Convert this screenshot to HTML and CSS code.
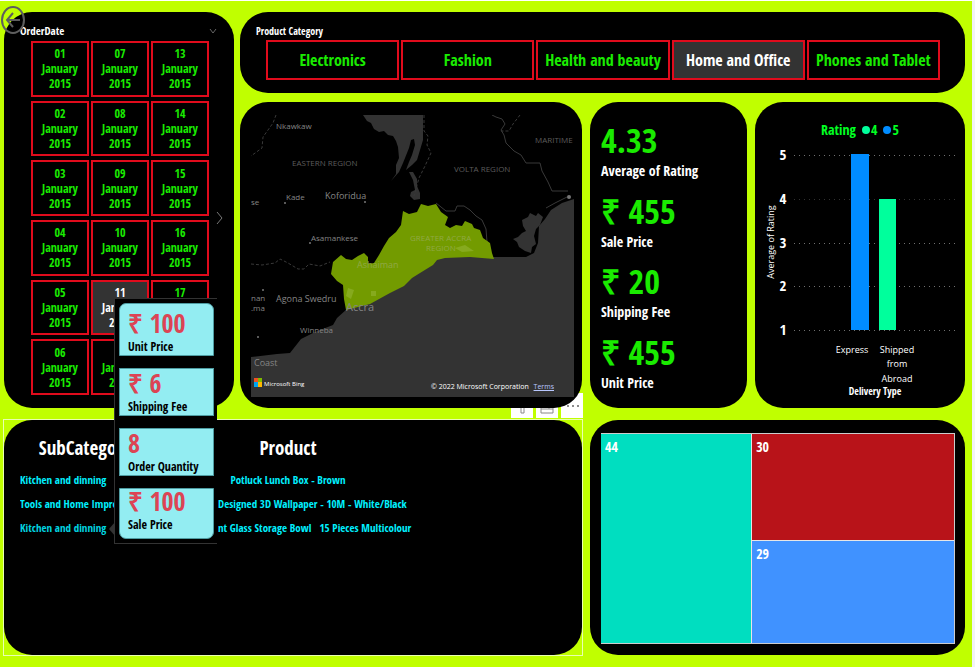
FILE: index.html
```html
<!DOCTYPE html>
<html lang="en">
<head>
<meta charset="utf-8">
<title>Sales dashboard</title>
<link rel="stylesheet" href="styles.css">
</head>
<body>
<main class="dashboard">
  <button class="back" aria-label="Back">
    <svg width="24" height="28" viewBox="0 0 24 28" fill="none" stroke="#5e5e5e" stroke-width="2"><ellipse cx="12" cy="14" rx="11" ry="13"/><path d="M19 14H6M12 7L6 14l6 7"/></svg>
  </button>

  <div class="upper">
    <section class="panel slicer">
      <header class="slicer-head">
        <h2 class="caption">OrderDate</h2>
        <svg width="8" height="6" viewBox="0 0 8 6" fill="none" stroke="#666"><path d="M1 1l3 4 3-4"/></svg>
      </header>
      <div class="dates">
        <button class="tile">01<br>January<br>2015</button>
        <button class="tile">02<br>January<br>2015</button>
        <button class="tile">03<br>January<br>2015</button>
        <button class="tile">04<br>January<br>2015</button>
        <button class="tile">05<br>January<br>2015</button>
        <button class="tile">06<br>January<br>2015</button>
        <button class="tile">07<br>January<br>2015</button>
        <button class="tile">08<br>January<br>2015</button>
        <button class="tile">09<br>January<br>2015</button>
        <button class="tile">10<br>January<br>2015</button>
        <button class="tile selected">11<br>January<br>2015</button>
        <button class="tile">12<br>January<br>2015</button>
        <button class="tile">13<br>January<br>2015</button>
        <button class="tile">14<br>January<br>2015</button>
        <button class="tile">15<br>January<br>2015</button>
        <button class="tile">16<br>January<br>2015</button>
        <button class="tile">17<br>January<br>2015</button>
        <button class="tile">18<br>January<br>2015</button>
      </div>
      <button class="next" aria-label="Next dates"><svg width="7" height="14" viewBox="0 0 7 14" fill="none" stroke="#777"><path d="M1 1l5 6-5 6"/></svg></button>
    </section>

    <div class="right">
      <section class="panel categories">
        <h2 class="caption small">Product Category</h2>
        <div class="tabs">
          <button class="tile">Electronics</button>
          <button class="tile">Fashion</button>
          <button class="tile">Health and beauty</button>
          <button class="tile selected">Home and Office</button>
          <button class="tile">Phones and Tablet</button>
        </div>
      </section>

      <div class="visuals">
        <section class="panel map">
          <svg class="map-canvas" viewBox="251 115 323 282" preserveAspectRatio="none" role="img" aria-label="Map of Greater Accra">
            <rect x="251" y="115" width="323" height="282" fill="#000"/>
            <g fill="#333">
              <path d="M363 115L367 121L371 123L374 129L379 132L384 131L388 135L393 136L396 141L398 147L399 158L396 165L396 174L391 181L399 172L403 163L409 148L411 140L414 139L415 145L412 155L409 162L406 170L412 165L417 160L420 150L423 140V115z"/>
              <path d="M409 172L413 172L417 179L417 186L420 193L420 199L414 200L410 196L411 192L415 190L413 180z"/>
              <path d="M574 199l-12 4-11 7-6 9-6 7-1 17-4 10-8 4h-32l-24-2-25 1-8 2-4 5-13 8-8 5-8 8-14 7-20 11-23 7-10 9-4 7-18 7-14 7-11 14-13 1-26 3v76h323z"/>
              <path d="M530 213l6 3 2-3 5 4-3 8-4 4-2 7 2 8-4 3-1 6-6-2-6-4-2-5-4-3 5-2 4-4 4-2-3-5-1-6 6-3z"/>
            </g>
            <g fill="none" stroke="#393939">
              <path d="M492 115l4 2 6 2 3 5-4 6 3 5 2 8 8 8 7 4 5 8h14l2 8 6 11 4 9h16M436 203l10 8 9 0 2-5h7l6 4 6 6 6 4 4 9 1 13 3 12M567 197l-12 6-9 5"/>
              <path stroke-dasharray="3 2" d="M520 115l-7 9-4 7-8 0M424 115l0 16 4 5-1 9 4 8-6 13-6 12-5 18M276 115l-3 8-10 14-1 11-11 8M251 264l11 1 13-2 5-4 8 4 10 6h6l5-5 11 2 10-4"/>
            </g>
            <path fill="#739b00" d="M346 310l-2-11-1-14-6-4-6-7 2-12 8-7 5 4 6 1 6-4 6-3 4 4 0 7 6-1 5-8 5-9 5-8 7-6 5-7 2-14 6 3 8-2 4-8 7 2 8-2 5 8 7 5-3 8 5 3 6-3 6 1 3-5 7 3 2 4 6 2 3 8 7 5 2 10 2 6-24-2-25 1-8 2-4 5-13 8-8 5-8 8-14 7-20 11z"/>
            <g fill="#86aa1e"><path d="M348 288l6 2-3 9-5-3zM371 291h5v5h-5zM455 248l10-3 9 6-12 1z"/></g>
            <g fill="#777"><circle cx="365" cy="202" r="1"/><circle cx="285" cy="203" r="1"/><circle cx="310" cy="243" r="1"/><circle cx="569" cy="197" r="2"/><circle cx="263" cy="290" r="1"/><circle cx="258" cy="337" r="1"/></g>
            <g class="place">
              <text x="276" y="129">Nkawkaw</text>
              <text x="286" y="200">Kade</text>
              <text class="town" x="325" y="199">Koforidua</text>
              <text x="311" y="241">Asamankese</text>
              <text class="town" x="276" y="302">Agona Swedru</text>
              <text x="300" y="333">Winneba</text>
              <text x="251" y="301">nan</text>
              <text x="251" y="311">.ma</text>
              <text class="town" x="254" y="366">Coast</text>
              <text class="city" x="346" y="311">Accra</text>
              <text x="251" y="205">se</text>
            </g>
            <g class="area">
              <text x="292" y="166">EASTERN REGION</text>
              <text x="454" y="172">VOLTA REGION</text>
              <text x="535" y="143">MARITIME</text>
            </g>
            <g class="area local">
              <text x="410" y="241">GREATER ACCRA</text>
              <text x="426" y="251">REGION</text>
              <text class="suburb" x="357" y="268">Ashaiman</text>
            </g>
            <path fill="#f25022" d="M254 378h4v4h-4z"/><path fill="#7fba00" d="M258 378h4v4h-4z"/><path fill="#00a4ef" d="M254 382h4v5h-4z"/><path fill="#ffb900" d="M258 382h4v5h-4z"/>
            <text class="brand" x="264" y="386">Microsoft Bing</text>
          </svg>
          <p class="credit">© 2022 Microsoft Corporation <a href="#terms">Terms</a></p>
        </section>

        <section class="panel cards">
          <div class="card"><span class="value">4.33</span><span class="label">Average of Rating</span></div>
          <div class="card"><span class="value">₹ 455</span><span class="label">Sale Price</span></div>
          <div class="card"><span class="value">₹ 20</span><span class="label">Shipping Fee</span></div>
          <div class="card"><span class="value">₹ 455</span><span class="label">Unit Price</span></div>
        </section>

        <section class="panel chart">
          <div class="legend"><span>Rating</span><span class="key four">4</span><span class="key five">5</span></div>
          <svg class="plot" viewBox="755 145 210 256" role="img" aria-label="Average of Rating by Delivery Type">
            <path stroke="#707070" stroke-dasharray="1 4" d="M794 155.500H957M794 243.500H957M794 286.500H957M794 330.500H957"/>
            <path stroke="#333" stroke-dasharray="1 4" d="M794 199.500H957"/>
            <rect x="851" y="154" width="18" height="176" fill="#008cff"/>
            <rect x="879" y="199" width="17" height="131" fill="#00ff9c"/>
            <g class="ticks"><text x="783" y="160">5</text><text x="783" y="204">4</text><text x="783" y="248">3</text><text x="783" y="291">2</text><text x="783" y="335">1</text></g>
            <text transform="translate(774 242) rotate(-90)">Average of Rating</text>
            <g><text x="852" y="353">Express</text><text x="897" y="353">Shipped</text><text x="897" y="367">from</text><text x="897" y="382">Abroad</text></g>
            <text class="strong" x="875" y="395">Delivery Type</text>
          </svg>
        </section>
      </div>
    </div>
  </div>

  <div class="lower">
    <div class="table-frame">
      <div class="toolbar">
        <button aria-label="Filters"><svg width="20" height="20" viewBox="0 0 20 20" fill="none" stroke="#888"><path d="M3 2h14l-5 7v8H9V9z"/></svg></button>
        <button aria-label="Focus mode"><svg width="20" height="20" viewBox="0 0 20 20" fill="none" stroke="#888"><path d="M4 6h12v11H4zM12 6v7h4M4 13h8"/></svg></button>
        <button aria-label="More options"><svg width="20" height="20" viewBox="0 0 20 20" fill="#666"><circle cx="6" cy="10" r="1"/><circle cx="11" cy="10" r="1"/><circle cx="16" cy="10" r="1"/></svg></button>
      </div>
      <section class="panel products">
        <table>
          <thead><tr><th>SubCategory</th><th>Product</th></tr></thead>
          <tbody>
            <tr><td>Kitchen and dinning</td><td>Potluck Lunch Box - Brown</td></tr>
            <tr><td>Tools and Home Improvement</td><td class="long">Designed 3D Wallpaper - 10M - White/Black</td></tr>
            <tr><td class="active">Kitchen and dinning</td><td class="long">nt Glass Storage Bowl   15 Pieces Multicolour</td></tr>
          </tbody>
        </table>
      </section>
    </div>
    <section class="panel treemap">
      <div class="tiles">
        <div class="cell teal">44</div>
        <div class="cell red">30</div>
        <div class="cell blue">29</div>
      </div>
    </section>
  </div>

  <aside class="tooltip">
    <div class="stat"><span class="value">₹ 100</span><span class="label">Unit Price</span></div>
    <div class="stat"><span class="value">₹ 6</span><span class="label">Shipping Fee</span></div>
    <div class="stat"><span class="value">8</span><span class="label">Order Quantity</span></div>
    <div class="stat"><span class="value">₹ 100</span><span class="label">Sale Price</span></div>
  </aside>
</main>
</body>
</html>
```
FILE: styles.css
```css
:root {
  --lime: #c0ff00;
  --green: #1aeb00;
  --red: #e00b1c;
  --font: "Open Sans Condensed", "Open Sans", sans-serif;
  --font-light: "Open Sans", sans-serif;
}
* { box-sizing: border-box; }
body {
  margin: 0;
  background: var(--lime);
  font-family: var(--font);
  font-size: 12px;
  font-weight: 700;
  color: #fff;
}
button { font: inherit; margin: 0; padding: 0; border: 0; background: none; }
h2, p { margin: 0; }
svg { display: block; }

.dashboard {
  position: relative;
  min-height: 100vh;
  padding: 11px 7px 12px 4px;
  border-top: 1px solid #fff;
  border-right: 3px solid #f2f2f6;
  display: grid;
  grid-template-rows: 396fr 235fr;
  gap: 12px;
}
.panel { background: #000; border-radius: 28px; min-width: 0; }
.back { position: absolute; left: 1px; top: 5px; z-index: 3; }
.caption { font-size: 11px; line-height: 14px; font-weight: 700; }
.caption.small { font-size: 10px; }

.upper {
  position: relative;
  z-index: 1;
  display: grid;
  grid-template-columns: 230fr 725fr;
  gap: 6px;
}
.slicer {
  position: relative;
  display: flex;
  flex-direction: column;
  gap: 3px;
  padding: 12px 25px 13px 27px;
}
.slicer-head {
  display: flex;
  align-items: center;
  justify-content: space-between;
  margin: 0 -8px 0 -11px;
}
.dates {
  flex: 1;
  display: grid;
  grid-template-rows: repeat(6, 1fr);
  grid-auto-flow: column;
  grid-auto-columns: 1fr;
  gap: 4px 2px;
}
.tile { border: 2px solid var(--red); color: var(--green); line-height: 15px; }
.tile.selected { background: #333; color: #fff; }
.next { position: absolute; right: 11px; top: 199px; }

.right { display: grid; grid-template-rows: 81fr 306fr; gap: 9px; }
.categories { padding: 12px 25px 13px 26px; display: flex; flex-direction: column; gap: 2px; }
.categories .caption { margin-left: -10px; }
.tabs { flex: 1; display: grid; grid-template-columns: repeat(5, 1fr); gap: 2px; }
.tabs .tile { font-size: 16px; }

.visuals { display: grid; grid-template-columns: 342fr 157fr 210fr; gap: 8px; }
.map { position: relative; padding: 13px 8px 11px 11px; display: flex; }
.map-canvas { flex: 1; width: 100%; min-width: 0; }
.map-canvas text { font-family: var(--font-light); font-weight: 400; }
.place { fill: #858585; font-size: 8px; }
.town { font-size: 9px; }
.city { font-size: 11px; }
.area { fill: #5c5c5c; font-size: 8px; }
.local { fill: #90a945; }
.suburb { font-size: 9px; }
.brand { fill: #fff; font-size: 6px; }
.credit { position: absolute; right: 28px; bottom: 15px; font-family: var(--font-light); font-size: 7px; line-height: 12px; font-weight: 400; }
.credit a { color: #b9c8ff; margin-left: 3px; }

.cards { padding: 17px 10px 15px 11px; display: flex; flex-direction: column; justify-content: space-between; }
.card { display: flex; flex-direction: column; }
.value { color: var(--green); font-size: 34px; line-height: 42px; white-space: nowrap; }
.label { font-size: 14px; line-height: 20px; }

.chart { padding: 18px 0 7px; display: flex; flex-direction: column; gap: 5px; }
.legend { display: flex; justify-content: center; align-items: center; gap: 6px; color: #0f2; font-size: 14px; line-height: 20px; }
.key { display: flex; align-items: center; gap: 1px; }
.key::before { content: ""; width: 8px; height: 8px; border-radius: 50%; background: #00ff9c; }
.key.five::before { background: #008cff; }
.plot { flex: 1; width: 100%; }
.plot text { font-family: var(--font-light); fill: #fff; text-anchor: middle; font-size: 9px; font-weight: 400; }
.plot .ticks text { font-family: var(--font); font-size: 15px; font-weight: 700; }
.plot .strong { font-family: var(--font); font-size: 10px; font-weight: 700; }

.lower { display: grid; grid-template-columns: 578fr 375fr; gap: 8px; }
.table-frame { position: relative; display: grid; min-width: 0; outline: 1px solid #e9ffb0; }
.toolbar { position: absolute; right: -1px; top: -27px; display: flex; gap: 3px; }
.toolbar button { width: 22px; height: 25px; background: #fff; display: grid; place-items: center; }
.products { padding: 14px 16px; overflow: hidden; }
.products table { border-collapse: collapse; table-layout: fixed; width: 392px; }
.products th { font-size: 19px; line-height: 28px; padding: 0 0 6px; }
.products th:first-child { width: 144px; padding-right: 14px; }
.products td { padding: 0; font-size: 11px; line-height: 24px; color: #00f0ff; text-align: center; white-space: pre; overflow: hidden; }
.products td:first-child { text-align: left; }
.products td.active { color: #00d5e0; }
.products td.long { text-align: left; padding-left: 54px; overflow: visible; }

.treemap { padding: 13px 10px 11px 11px; display: grid; }
.tiles {
  display: grid;
  grid-template-columns: 151fr 203fr;
  grid-template-rows: 107fr 103fr;
  gap: 1px;
  border: 1px solid #ccc;
  border-left: 0;
  background: #e6e6e6;
}
.cell { padding: 4px; font-size: 14px; line-height: 18px; }
.teal { grid-row: span 2; background: #00dec0; }
.red { background: #b81319; }
.blue { background: #4092ff; }

.tooltip {
  position: absolute;
  z-index: 4;
  left: 114px;
  top: 297px;
  width: 103px;
  padding: 4px 3px 4px 4px;
  background: #000;
  border: solid #333;
  border-width: 1px 0 1px 1px;
  display: flex;
  flex-direction: column;
  gap: 12px;
}
.tooltip::before {
  content: "";
  position: absolute;
  right: 100%;
  bottom: 7px;
  border: 7px solid transparent;
  border-right: 6px solid #333;
  border-left: 0;
}
.stat {
  display: flex;
  flex-direction: column;
  height: 48px;
  padding: 0 8px;
  background: #93edf2;
  border: 1px solid #4e9ca2;
}
.stat:first-child { height: 53px; padding-top: 5px; border-radius: 7px 7px 0 0; }
.stat:last-child { height: 51px; border-radius: 0 0 7px 7px; }
.stat .value { color: #dc4454; font-size: 26px; line-height: 28px; }
.stat:last-child .value { line-height: 24px; }
.stat .label { color: #000; font-size: 12px; line-height: 20px; }
.stat:last-child .label { line-height: 24px; }
```
